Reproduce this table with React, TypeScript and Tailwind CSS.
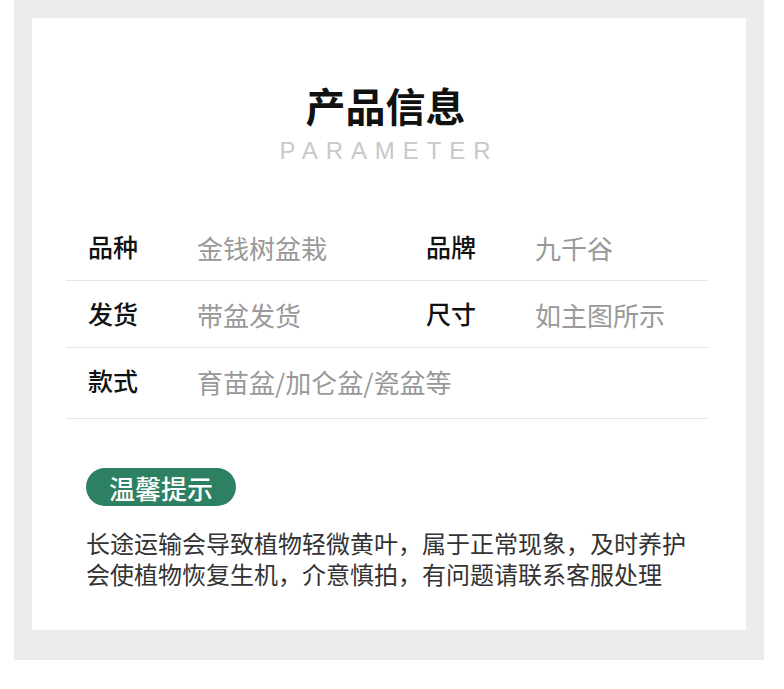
const rows = [
  [
    { label: "品种", value: "金钱树盆栽" },
    { label: "品牌", value: "九千谷" },
  ],
  [
    { label: "发货", value: "带盆发货" },
    { label: "尺寸", value: "如主图所示" },
  ],
  [{ label: "款式", value: "育苗盆/加仑盆/瓷盆等" }],
];

function Cell({ label, value }: { label: string; value: string }) {
  return (
    <div className="flex w-[338px] shrink-0 items-center whitespace-nowrap">
      <span className="w-[109px] shrink-0 text-[25px] font-medium text-[#111]">{label}</span>
      <span className="text-[26px] text-[#999]">{value}</span>
    </div>
  );
}

export default function App() {
  return (
    <div
      className="min-h-screen bg-white"
      style={{ fontFamily: '"Noto Sans CJK SC", "Noto Sans", sans-serif' }}
    >
      <div className="ml-[14px] h-[660px] w-[750px] bg-[#ececec] px-[18px] pt-[18px]">
        <div className="h-[612px] bg-white">
          <div className="flex flex-col items-center pt-[65px]">
            <h1 className="pr-[7px] text-[40px] font-bold leading-[44px] text-[#111]">产品信息</h1>
            <p
              className="mt-[9px] text-[24px] leading-[30px] tracking-[0.33em] text-[#c8c8c8]"
              style={{ fontFamily: '"Liberation Sans", sans-serif' }}
            >
              PARAMETER
            </p>
          </div>

          <div className="ml-[34px] mt-[48px] w-[642px]">
            {rows.map((row, i) => (
              <div
                key={i}
                className={`flex items-center border-b border-[#e6e6e6] pl-[22px] ${
                  i === rows.length - 1 ? "h-[71px] pb-[4px]" : "h-[67px]"
                }`}
              >
                {row.map((c) => (
                  <Cell key={c.label} {...c} />
                ))}
              </div>
            ))}
          </div>

          <div className="px-[54px] pt-[49px]">
            <div className="flex h-[38px] w-[150px] items-center justify-center rounded-full bg-[#2d8061] text-[26px] font-medium text-white">
              温馨提示
            </div>
            <div className="mt-[21px] text-[24px] leading-[31px] text-[#333]">
              <div>长途运输会导致植物轻微黄叶，属于正常现象，及时养护</div>
              <div>会使植物恢复生机，介意慎拍，有问题请联系客服处理</div>
            </div>
          </div>
        </div>
      </div>
    </div>
  );
}
